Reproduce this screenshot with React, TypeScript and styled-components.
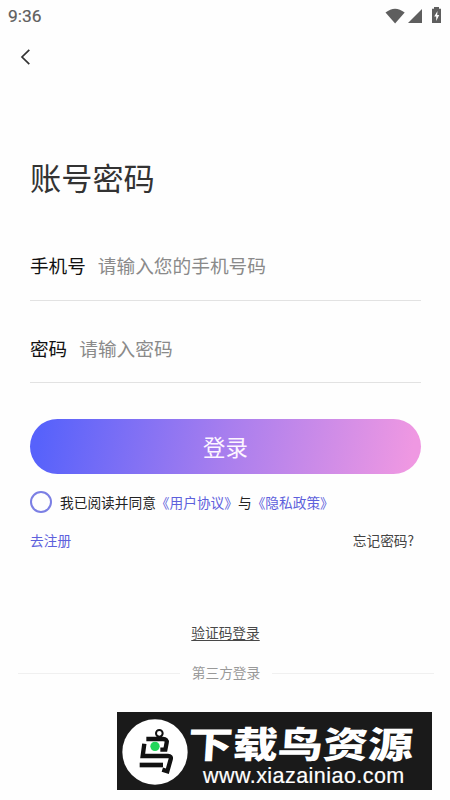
import React, { useState } from "react";
import styled, { createGlobalStyle } from "styled-components";

const GlobalStyle = createGlobalStyle`
  * {
    box-sizing: border-box;
  }

  body {
    margin: 0;
    background: #fefefe;
    font-family: "Noto Sans CJK SC", sans-serif;
  }
`;

const Page = styled.div`
  display: flex;
  flex-direction: column;
  width: 450px;
  height: 800px;
  overflow: hidden;
  background: #fefefe;
`;

const StatusBar = styled.div`
  display: flex;
  justify-content: space-between;
  align-items: center;
  height: 32px;
  padding: 0 7px 0 8px;
  color: #5e5e5e;
  font-family: Roboto, sans-serif;
  font-size: 17.4px;
  -webkit-text-stroke: 0.2px #5e5e5e;
`;

const NavBar = styled.div`
  display: flex;
  align-items: center;
  height: 50px;
  padding: 0 0 1px 20px;
`;

const BackButton = styled.button`
  display: flex;
  padding: 0;
  border: none;
  background: none;
`;

const Form = styled.form`
  display: flex;
  flex-direction: column;
  padding: 70px 29px 0 30px;
`;

const Title = styled.h1`
  margin: 0;
  height: 66px;
  line-height: 49px;
  color: #333;
  font-size: 31.2px;
  font-weight: 400;
`;

const Field = styled.label`
  display: flex;
  align-items: center;
  gap: 12px;
  height: 83px;
  padding-top: 10px;
  border-bottom: 1px solid #e2e2e2;
  color: #111;
  font-size: 18.6px;

  & + & {
    height: 82px;
    padding-top: 11px;
  }
`;

const Input = styled.input`
  flex: 1;
  min-width: 0;
  padding: 0;
  border: none;
  outline: none;
  background: none;
  font-family: inherit;
  font-size: 18.7px;

  &::placeholder {
    color: #8a8a8a;
    opacity: 1;
  }
`;

const LoginButton = styled.button`
  height: 55px;
  margin-top: 36px;
  padding: 0 0 2px;
  border: none;
  border-radius: 28px;
  background: linear-gradient(100deg, #5762fb 3%, #a87eee 50%, #ef98e2 97%);
  color: #fdf5ff;
  font-family: inherit;
  font-size: 22.4px;
`;

const Agreement = styled.div`
  display: flex;
  align-items: center;
  height: 56px;
  color: #222;
  font-size: 13.7px;
  white-space: nowrap;
`;

const Radio = styled.button<{ $checked: boolean }>`
  width: 22px;
  height: 22px;
  margin-right: 8px;
  padding: 0;
  border: 2px solid #7b7fe4;
  border-radius: 50%;
  background: ${({ $checked }) => ($checked ? "#7b7fe4" : "transparent")};
`;

const Link = styled.span`
  color: #5d60dc;
`;

const FormLinks = styled.div`
  display: flex;
  justify-content: space-between;
  height: 20px;
  padding-right: 7px;
  line-height: 20px;
  color: #444;
  font-size: 13.7px;
`;

const CodeLogin = styled.a`
  align-self: center;
  margin-top: 72px;
  padding-left: 1px;
  height: 20px;
  line-height: 20px;
  color: #484848;
  font-size: 13.7px;
  text-decoration: underline;
  text-underline-offset: 2px;
`;

const Divider = styled.div`
  display: flex;
  align-items: center;
  gap: 12px;
  height: 20px;
  margin: 21px 16px 0 18px;
  color: #999;
  font-size: 13.7px;

  &::before,
  &::after {
    content: "";
    flex: 1;
    height: 1px;
    background: #f0f0f0;
  }

  span {
    padding-bottom: 2px;
  }
`;

const Banner = styled.div`
  display: flex;
  width: 315px;
  height: 78px;
  margin: 29px 0 0 117px;
  padding: 7px 0 0 5px;
  background: #1a1a1a;
  color: #fff;
`;

const BannerText = styled.div`
  display: flex;
  flex-direction: column;
  white-space: nowrap;
`;

const BannerName = styled.div`
  height: 45px;
  line-height: 47px;
  font-size: 36.5px;
  font-weight: 900;
  transform: scaleX(1.235) skewX(-3deg);
  transform-origin: 0 50%;
`;

const BannerUrl = styled.div`
  height: 24px;
  padding-left: 15px;
  line-height: 24px;
  font-family: "Liberation Sans", sans-serif;
  font-size: 21.5px;
  letter-spacing: 0.45px;
  -webkit-text-stroke: 0.2px #fff;
`;

const StatusIcons = () => (
  <svg width="60" height="20" viewBox="0 0 60 20" fill="#5e5e5e">
    <path d="M2.5 6.5Q12 -1.2 21.7 6.5L12.1 17.5Z" />
    <path d="M39 3V17H25Z" />
    <path d="M51 2.7V1H56V2.7H58V17H49V2.7Z" />
    <path d="M54.5 5L51.2 10.5H53.2V15L56.2 9H54.2Z" fill="#fefefe" />
  </svg>
);

const BirdLogo = () => (
  <svg width="66" height="66" viewBox="35 43 198 198" fill="none">
    <circle cx="134" cy="142" r="98" fill="#fff" />
    <g stroke="#111" strokeWidth="13">
      <circle cx="147" cy="86" r="10" strokeWidth="6" />
      <path d="M108 103H158Q171 103 169 114L165 135H150" />
      <path d="M102 117L97 154H173Q184 154 181 164L171 200L156 195" />
      <path d="M88 181H158" strokeWidth="14" />
    </g>
    <circle cx="134" cy="125" r="14" fill="#22d65a" />
  </svg>
);

const App = () => {
  const [agreed, setAgreed] = useState(false);

  return (
    <Page>
      <GlobalStyle />
      <StatusBar>
        <span>9:36</span>
        <StatusIcons />
      </StatusBar>
      <NavBar>
        <BackButton>
          <svg width="11" height="16" viewBox="0 0 11 16" fill="none">
            <path d="M9.3 0.8L2 8L9.3 15.2" stroke="#333" strokeWidth="1.7" />
          </svg>
        </BackButton>
      </NavBar>
      <Form onSubmit={(e) => e.preventDefault()}>
        <Title>账号密码</Title>
        <Field>
          手机号
          <Input type="tel" placeholder="请输入您的手机号码" />
        </Field>
        <Field>
          密码
          <Input type="password" placeholder="请输入密码" />
        </Field>
        <LoginButton>登录</LoginButton>
        <Agreement>
          <Radio
            type="button"
            $checked={agreed}
            onClick={() => setAgreed(!agreed)}
          />
          我已阅读并同意
          <Link>《用户协议》</Link>与<Link>《隐私政策》</Link>
        </Agreement>
        <FormLinks>
          <Link>去注册</Link>
          <span>忘记密码?</span>
        </FormLinks>
      </Form>
      <CodeLogin>验证码登录</CodeLogin>
      <Divider>
        <span>第三方登录</span>
      </Divider>
      <Banner>
        <BirdLogo />
        <BannerText>
          <BannerName>下载鸟资源</BannerName>
          <BannerUrl>www.xiazainiao.com</BannerUrl>
        </BannerText>
      </Banner>
    </Page>
  );
};

export default App;
